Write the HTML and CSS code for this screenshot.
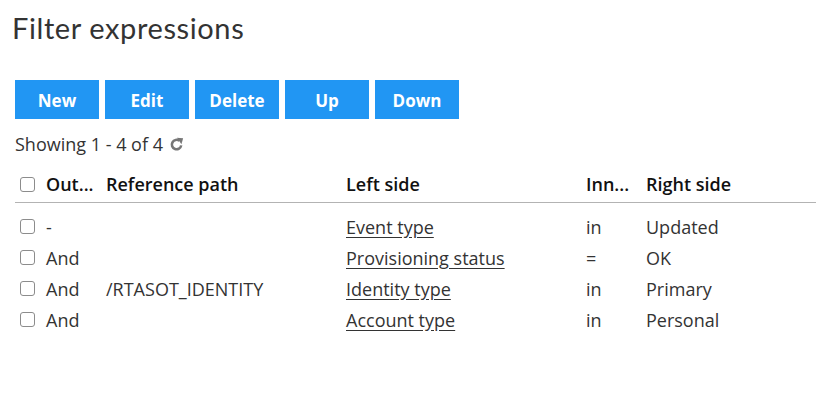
FILE: index.html
```html
<!DOCTYPE html>
<html>
<head>
    <title>Filter expressions</title>
    <link rel="stylesheet" href="styles.css">
</head>
<body>
    <div class="page">
        <h1>Filter expressions</h1>

        <div class="toolbar">
            <button>New</button>
            <button>Edit</button>
            <button>Delete</button>
            <button>Up</button>
            <button>Down</button>
        </div>

        <div class="count">
            Showing 1 - 4 of 4
            <svg class="refresh" width="15" height="15" viewBox="0 0 14 14">
                <path d="M11.4 7.8A4.4 4.4 0 1 1 9.8 3.6" fill="none" stroke="#777" stroke-width="2.4"/>
                <path d="M7.4 0.8L13.2 1.2L11.6 6.8Z" fill="#777"/>
            </svg>
        </div>

        <table class="grid">
            <thead>
                <tr>
                    <th class="col-check"><input type="checkbox"></th>
                    <th class="col-op">Out...</th>
                    <th class="col-ref">Reference path</th>
                    <th class="col-left">Left side</th>
                    <th class="col-inn">Inn...</th>
                    <th>Right side</th>
                </tr>
            </thead>
            <tbody>
                <tr class="first">
                    <td><input type="checkbox"></td>
                    <td>-</td>
                    <td></td>
                    <td><a href="#">Event type</a></td>
                    <td>in</td>
                    <td>Updated</td>
                </tr>
                <tr>
                    <td><input type="checkbox"></td>
                    <td>And</td>
                    <td></td>
                    <td><a href="#">Provisioning status</a></td>
                    <td>=</td>
                    <td>OK</td>
                </tr>
                <tr>
                    <td><input type="checkbox"></td>
                    <td>And</td>
                    <td>/RTASOT_IDENTITY</td>
                    <td><a href="#">Identity type</a></td>
                    <td>in</td>
                    <td>Primary</td>
                </tr>
                <tr>
                    <td><input type="checkbox"></td>
                    <td>And</td>
                    <td></td>
                    <td><a href="#">Account type</a></td>
                    <td>in</td>
                    <td>Personal</td>
                </tr>
            </tbody>
        </table>
    </div>
</body>
</html>
```

FILE: styles.css
```css
body {
    margin: 0;
    font-family: "Open Sans", Arial, sans-serif;
    color: #333;
    background: #fff;
}
.page {
    padding: 8px 0 0 15px;
}
h1 {
    font-family: Lato, "Open Sans", sans-serif;
    font-weight: 400;
    font-size: 29px;
    line-height: 40px;
    margin: 0 0 32px -3px;
    color: #333;
    letter-spacing: 0.6px;
}
.toolbar {
    display: flex;
    gap: 6px;
}
.toolbar button {
    width: 84px;
    height: 39px;
    background-color: #2196f3;
    color: #fff;
    border: none;
    border-radius: 0;
    font-family: "Open Sans", Arial, sans-serif;
    font-weight: 700;
    font-size: 17px;
    padding: 2px 0 0;
    cursor: pointer;
}
.count {
    margin-top: 13px;
    font-size: 18px;
    line-height: 24px;
    display: flex;
    align-items: center;
    gap: 6px;
}
.refresh {
    margin-top: 1px;
}
.grid {
    margin-top: 10px;
    width: 801px;
    border-collapse: collapse;
    font-size: 18px;
}
.grid th {
    text-align: left;
    font-weight: 600;
    color: #111;
    height: 36px;
    padding: 0;
    border-bottom: 1px solid #b3b3b3;
    white-space: nowrap;
}
.grid td {
    height: 31px;
    padding: 0;
}
.grid tr.first td {
    padding-top: 8px;
}
.col-check {
    width: 31px;
}
.col-op {
    width: 60px;
}
.col-ref,
.col-left {
    width: 240px;
}
.col-inn {
    width: 60px;
}
.grid input[type="checkbox"] {
    appearance: none;
    box-sizing: border-box;
    width: 15px;
    height: 15px;
    margin: 0 0 0 5px;
    border: 1.5px solid #8c8c8c;
    border-radius: 3px;
    background: #fff;
    display: block;
}
.grid a {
    color: #333;
    text-decoration: underline;
    text-underline-offset: 3px;
}
```
